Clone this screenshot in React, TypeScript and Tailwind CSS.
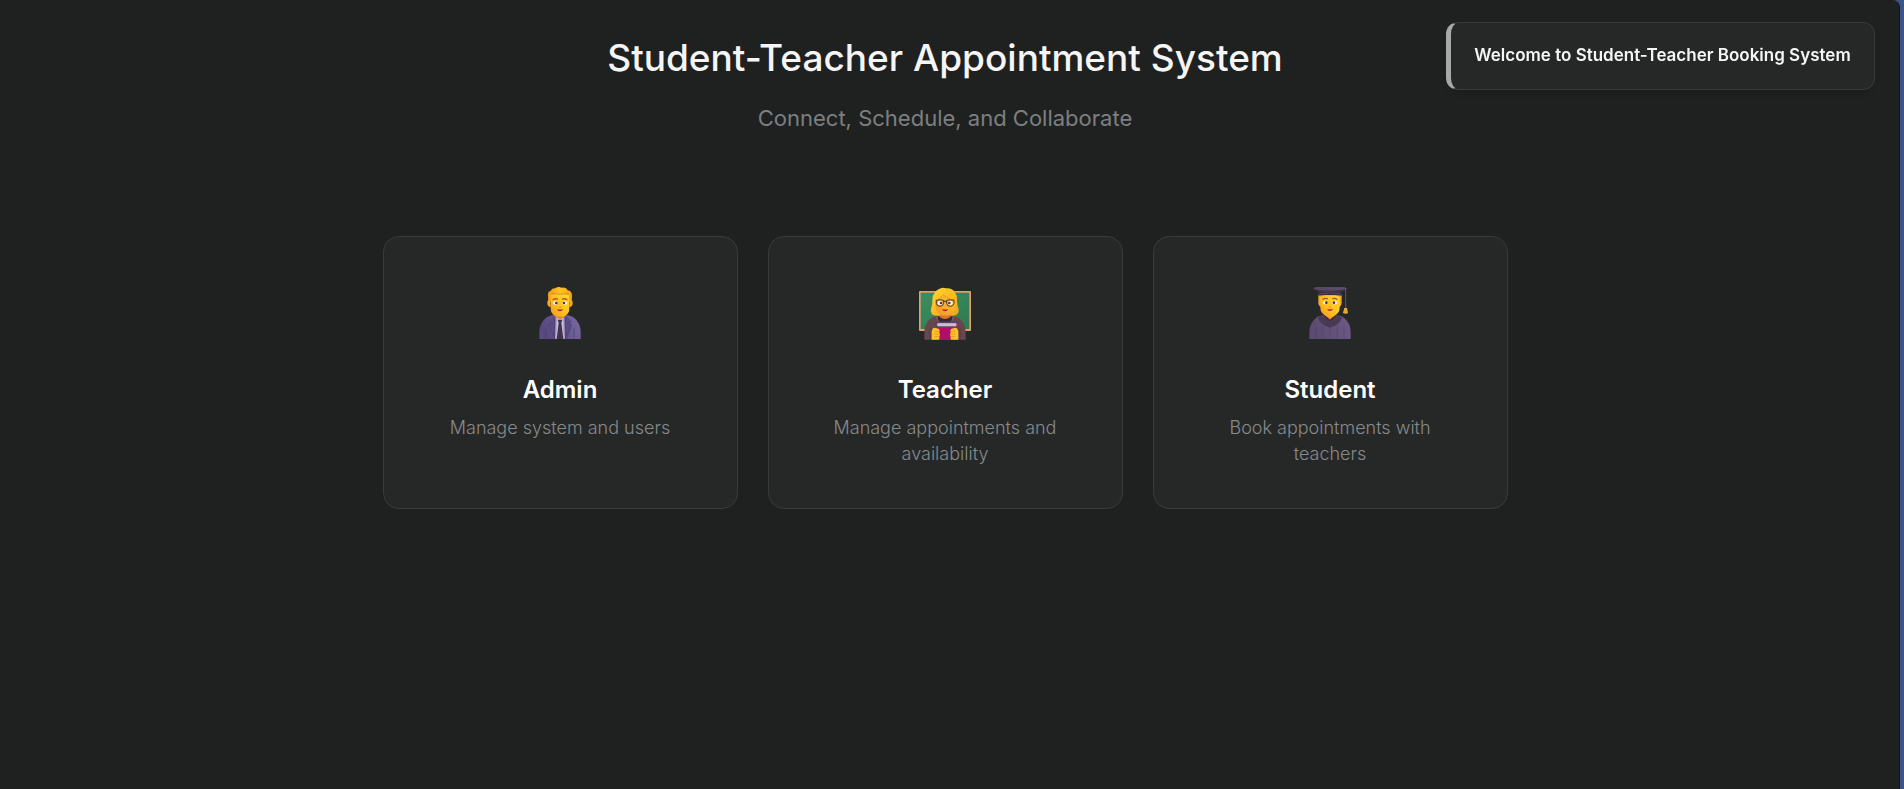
import type { ReactNode } from "react";

function AdminIcon() {
  return (
    <svg viewBox="39 51 162 162" className="size-[54px]" aria-hidden="true">
      <defs>
        <linearGradient id="a-suit" x1="0" x2="1" y1="0.3" y2="0">
          <stop offset="0" stopColor="#584a80" />
          <stop offset="1" stopColor="#7a69a4" />
        </linearGradient>
        <linearGradient id="a-face" x1="1" x2="0" y1="0" y2="1">
          <stop offset="0" stopColor="#ffdb2a" />
          <stop offset="0.6" stopColor="#fcc01e" />
          <stop offset="1" stopColor="#f5931f" />
        </linearGradient>
        <linearGradient id="a-hair" x1="0" x2="1" y1="0" y2="0">
          <stop offset="0" stopColor="#f39a1c" />
          <stop offset="0.5" stopColor="#ffc423" />
          <stop offset="1" stopColor="#f5a61e" />
        </linearGradient>
      </defs>
      <path d="M58 207v-20c0-28 18-50 45-53h34c28 3 45 25 45 53v20z" fill="url(#a-suit)" />
      <path d="M103 139l17-6 17 6v68h-34z" fill="#c9bfdd" />
      <path d="M103 139l8 6 -2 62h-6zM137 139l-8 6 2 62h6z" fill="#a99dc4" />
      <path d="M113 149h14l-3 9 6 49h-20l6-49z" fill="#43324f" />
      <path d="M101 138l6-2 -2 71h-8L84 165l11-3-10-7zM139 138l-6-2 2 71h8l13-42-11-3 10-7z" fill="#5c4d86" />
      <path d="M86 154l11 7-11 3 16 35M154 154l-11 7 11 3-16 35M78 173v34M162 173v34M103 145v62M137 145v62" fill="none" stroke="#463a6b" strokeWidth="2" strokeOpacity="0.8" />
      <path d="M104 125h32v14q-16 16-32 0z" fill="#e97f23" />
      <path d="M84 76Q82 65 92 62q4-7 13-7 9-7 19-2 14-3 19 8 12 2 13 14l-1 20H85z" fill="url(#a-hair)" />
      <path d="M91 91q-9-3-9 8 0 12 10 12zM149 91q9-3 9 8 0 12-10 12z" fill="#f7a824" />
      <path d="M92 75q28-8 56 0v39q0 17-13 23-15 7-30 0-13-6-13-23z" fill="url(#a-face)" />
      <path d="M86 85q1-13 10-17 25 7 50 0 9 5 8 18l-6 5-2-18q-26-4-52 0l-2 18z" fill="#f6a51c" />
      <path d="M94 70q26 5 52 1" fill="none" stroke="#c77a18" strokeWidth="2" />
      <ellipse cx="106" cy="99" rx="7" ry="5" fill="#fff" />
      <ellipse cx="134" cy="99" rx="7" ry="5" fill="#fff" />
      <circle cx="109" cy="99" r="4" fill="#493440" />
      <circle cx="132" cy="99" r="4" fill="#493440" />
      <path d="M99 89q5-4 13-2M128 87q8-2 13 2" fill="none" stroke="#c4532b" strokeWidth="4" strokeLinecap="round" />
      <path d="M117 111q3 3 6 0" fill="none" stroke="#f08a1c" strokeWidth="3" />
      <path d="M111 117q9 3 18 0-2 7-9 7t-9-7z" fill="#b5183e" />
    </svg>
  );
}

function TeacherIcon() {
  return (
    <svg viewBox="39 51 162 162" className="size-[54px]" aria-hidden="true">
      <defs>
        <linearGradient id="t-board" x1="0" x2="1" y1="0" y2="1">
          <stop offset="0" stopColor="#3c8d61" />
          <stop offset="1" stopColor="#307a51" />
        </linearGradient>
        <linearGradient id="t-hair" x1="0" x2="1" y1="0" y2="1">
          <stop offset="0" stopColor="#ffd52b" />
          <stop offset="1" stopColor="#f5a21c" />
        </linearGradient>
        <linearGradient id="t-face" x1="1" x2="0" y1="0" y2="1">
          <stop offset="0" stopColor="#ffc62c" />
          <stop offset="1" stopColor="#f39423" />
        </linearGradient>
      </defs>
      <rect x="42" y="63" width="156" height="120" rx="3" fill="#dfa16c" />
      <rect x="47" y="68" width="146" height="109" fill="url(#t-board)" />
      <path d="M58 209v-24c0-25 17-45 44-49h36c28 4 44 24 44 49v24z" fill="#66484c" />
      <path d="M75 172v37M165 172v37" stroke="#50353c" strokeWidth="2" />
      <path d="M99 139q21 17 42 0v30H99z" fill="#342936" />
      <path d="M93 139l10 20-12 9M147 139l-10 20 12 9" fill="none" stroke="#85605c" strokeWidth="3" />
      <path d="M104 56Q114 51 123 55 141 53 149 66 158 77 156 92 156 104 160 114 165 133 147 137H93Q74 134 78 116 83 104 82 90 82 76 90 67 94 59 104 56Z" fill="url(#t-hair)" />
      <path d="M105 125h30v16q-15 12-30 0z" fill="#d9762a" />
      <path d="M91 92q15-3 24-17 14 12 33 13l1 14q0 24-14 32-15 6-30 0-14-8-14-32z" fill="url(#t-face)" />
      <path d="M90 92q17-4 25-18 12 14 34 15" fill="none" stroke="#d98d16" strokeWidth="2" />
      <circle cx="105" cy="99" r="7" fill="#fff5d9" />
      <circle cx="136" cy="99" r="7" fill="#fff5d9" />
      <circle cx="108" cy="99" r="4" fill="#553c40" />
      <circle cx="133" cy="99" r="4" fill="#553c40" />
      <path d="M94 91q10-3 22 0v9q-2 9-11 9-10 0-11-9zM125 91q10-3 22 0v9q-2 9-11 9-10 0-11-9zM116 94h9" fill="none" stroke="#493549" strokeWidth="3" />
      <path d="M111 117q9 3 18 0-2 7-9 7t-9-7z" fill="#bd173d" />
      <path d="M91 163q0-8 8-8h57v54H91z" fill="#b00f66" />
      <path d="M91 163q0-8 8-8h57v5H98v9h57v5H95q-4-2-4-11z" fill="#514769" />
      <path d="M98 160h56v9H98q-4-4 0-9z" fill="#d5d2df" />
      <path d="M98 165h56" stroke="#a6a0b8" strokeWidth="2" />
      <path d="M84 175q-5 7-4 16v18h22q3-4 1-8l2-7-2-6 1-7-3-5-12-3zM156 175q5 7 4 16v18h-22q-3-4-1-8l-2-7 2-6-1-7 3-5 12-3z" fill="#ffc02a" />
      <path d="M89 184h13M89 192h14M89 200h13M151 184h-13M151 192h-14M151 200h-13" stroke="#e98b20" strokeWidth="2" />
    </svg>
  );
}

function StudentIcon() {
  return (
    <svg viewBox="39 51 162 162" className="size-[54px]" aria-hidden="true">
      <defs>
        <linearGradient id="s-gown" x1="0" x2="1" y1="0.2" y2="0">
          <stop offset="0" stopColor="#5b4a71" />
          <stop offset="1" stopColor="#6d5b86" />
        </linearGradient>
        <linearGradient id="s-face" x1="1" x2="0" y1="0" y2="1">
          <stop offset="0" stopColor="#ffdb2e" />
          <stop offset="0.6" stopColor="#fdbd20" />
          <stop offset="1" stopColor="#f38d23" />
        </linearGradient>
      </defs>
      <path d="M58 207v-20c0-28 18-50 45-53h34c28 3 45 25 45 53v20z" fill="url(#s-gown)" />
      <path d="M78 171v36M98 165v42M120 171v36M142 165v42M162 171v36" stroke="#4d3e62" strokeWidth="2" strokeOpacity="0.7" />
      <path d="M94 136q26-5 52 0l10 8q-11 24-36 29-25-5-36-29z" fill="#493a52" />
      <path d="M102 133l18 15 18-15-7 13-11 7-11-7z" fill="#31283c" />
      <path d="M104 124h32v11l-16 14-16-14z" fill="#e97f23" />
      <path d="M85 75h70v22q0 13-9 14H94q-9-1-9-14z" fill="#f5a623" />
      <path d="M91 80q29-7 58 0v32q0 16-11 22l-18 11-18-11q-11-6-11-22z" fill="url(#s-face)" />
      <path d="M86 65h68v12q-34-6-68 0z" fill="#3b3046" />
      <path d="M86 72q34-7 68 0" fill="none" stroke="#55465f" strokeWidth="3" />
      <path d="M76 51h88l9 5-18 8q-34 4-70 0L69 57z" fill="#594765" />
      <path d="M69 56l18 6q33 4 66 0l18-6" fill="none" stroke="#3d3148" strokeWidth="3" />
      <path d="M118 57l49-1v62" fill="none" stroke="#65507a" strokeWidth="3" />
      <path d="M163 114h8l3 15q-7 5-15 0z" fill="#f4b42c" />
      <path d="M162 120h10M164 121v9M169 121v9" stroke="#bd7923" strokeWidth="1" />
      <ellipse cx="106" cy="98" rx="7" ry="5" fill="#fff" />
      <ellipse cx="134" cy="98" rx="7" ry="5" fill="#fff" />
      <circle cx="109" cy="98" r="4" fill="#493440" />
      <circle cx="132" cy="98" r="4" fill="#493440" />
      <path d="M99 88q5-4 13-2M128 86q8-2 13 2" fill="none" stroke="#a9562a" strokeWidth="4" strokeLinecap="round" />
      <path d="M117 110q3 3 6 0" fill="none" stroke="#f08a1c" strokeWidth="3" />
      <path d="M111 116q9 3 18 0-2 7-9 7t-9-7z" fill="#bd263a" />
    </svg>
  );
}

const roles: { name: string; description: string; icon: ReactNode }[] = [
  { name: "Admin", description: "Manage system and users", icon: <AdminIcon /> },
  { name: "Teacher", description: "Manage appointments and availability", icon: <TeacherIcon /> },
  { name: "Student", description: "Book appointments with teachers", icon: <StudentIcon /> },
];

export default function App() {
  return (
    <div className="min-h-screen bg-[#3b5487] pr-1 font-['Inter','Liberation_Sans',sans-serif]">
      <div className="min-h-screen rounded-tr-lg border-r border-[#141616] bg-[#1f2121] px-4 pt-[30px] pr-[25px] pb-10">
        <header className="text-center">
          <h1 className="text-[37px] leading-[56px] font-medium text-[#f5f5f5]">Student-Teacher Appointment System</h1>
          <p className="mt-4 text-[22px] leading-8 text-[#7c7f80]">Connect, Schedule, and Collaborate</p>
        </header>
        <main className="mx-auto mt-[102px] grid max-w-[1125px] grid-cols-1 gap-[30px] md:grid-cols-3">
          {roles.map((role) => (
            <a
              key={role.name}
              href={`#${role.name.toLowerCase()}`}
              className="flex flex-col items-center rounded-2xl border border-[#393b3b] bg-[#262828] px-10 pt-[50px] pb-[41px] text-center"
            >
              {role.icon}
              <h2 className="mt-[34px] text-2xl leading-[30px] font-semibold text-white">{role.name}</h2>
              <p className="mt-[10px] text-[18px] leading-[26px] font-light text-[#878a8b]">{role.description}</p>
            </a>
          ))}
        </main>
      </div>
      <div
        role="status"
        className="fixed top-[22px] right-[29px] min-w-[429px] rounded-xl border border-l-[5px] border-[#393b3b] border-l-[#a7a9a9] bg-[#262828] px-5 pt-5 pb-[22px] text-center text-[17px] leading-6 font-semibold whitespace-nowrap text-[#f5f5f5] shadow-md"
      >
        Welcome to Student-Teacher Booking System
      </div>
    </div>
  );
}
